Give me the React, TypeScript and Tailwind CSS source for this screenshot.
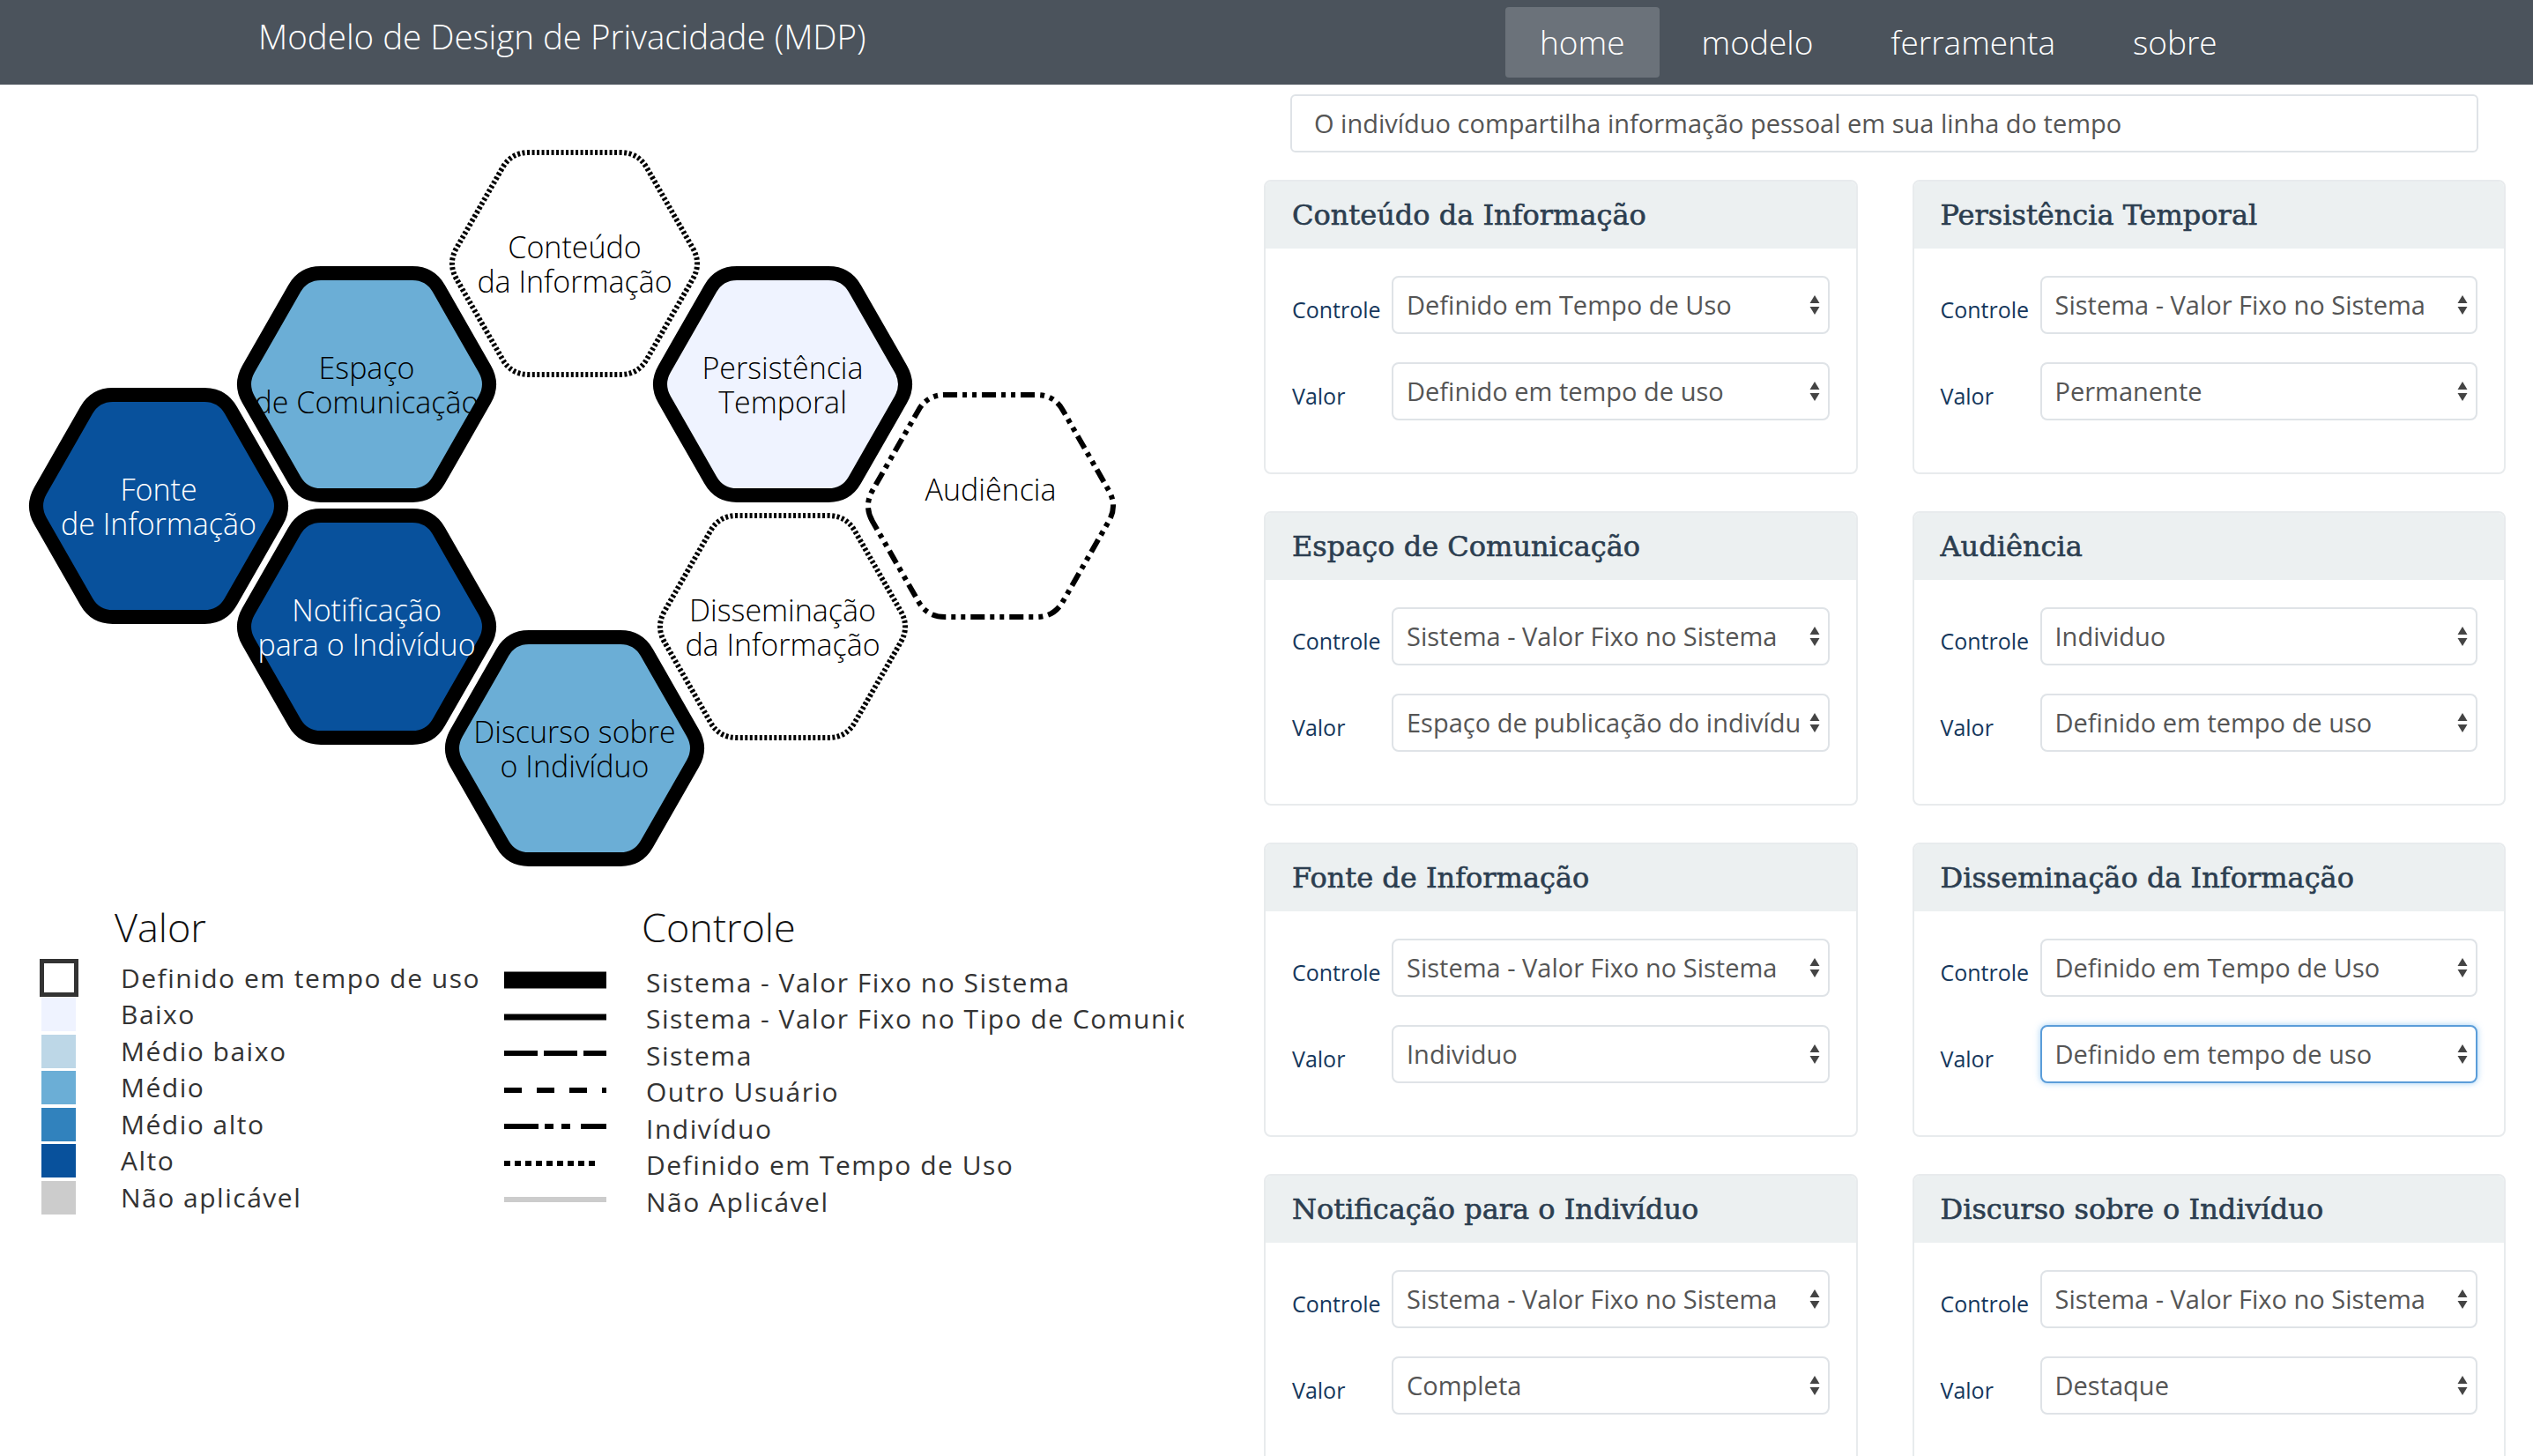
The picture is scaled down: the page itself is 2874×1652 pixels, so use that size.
import React from 'react';

type Pt = [number, number];

// rounded flat-top hexagon
function hexPath(cx: number, cy: number, w: number, h: number, r: number) {
    const pts: Pt[] = [
        [cx - w / 2, cy],
        [cx - w / 4, cy - h / 2],
        [cx + w / 4, cy - h / 2],
        [cx + w / 2, cy],
        [cx + w / 4, cy + h / 2],
        [cx - w / 4, cy + h / 2],
    ];
    const toward = (a: Pt, b: Pt, d: number): Pt => {
        const dx = b[0] - a[0];
        const dy = b[1] - a[1];
        const len = Math.hypot(dx, dy);
        return [a[0] + (dx / len) * d, a[1] + (dy / len) * d];
    };
    let d = '';
    pts.forEach((p, i) => {
        const a = toward(p, pts[(i + 5) % 6], r);
        const b = toward(p, pts[(i + 1) % 6], r);
        d += `${i === 0 ? 'M' : 'L'}${a[0].toFixed(1)},${a[1].toFixed(1)} Q${p[0]},${p[1]} ${b[0].toFixed(1)},${b[1].toFixed(1)} `;
    });
    return d + 'Z';
}

const solid = { strokeWidth: 16 };
const dotted = { strokeWidth: 6, strokeDasharray: '3 2.5' };
const dashDot = { strokeWidth: 6, strokeDasharray: '16 6 5 6 5 6' };

const hexes = [
    { x: 652, y: 299, lines: ['Conteúdo', 'da Informação'], fill: '#ffffff', text: '#000', s: dotted },
    { x: 416, y: 436, lines: ['Espaço', 'de Comunicação'], fill: '#6baed6', text: '#000', s: solid },
    { x: 888, y: 436, lines: ['Persistência', 'Temporal'], fill: '#eff3ff', text: '#000', s: solid },
    { x: 180, y: 574, lines: ['Fonte', 'de Informação'], fill: '#08519c', text: '#fff', s: solid },
    { x: 1124, y: 574, lines: ['Audiência'], fill: '#ffffff', text: '#000', s: dashDot },
    { x: 416, y: 711, lines: ['Notificação', 'para o Indivíduo'], fill: '#08519c', text: '#fff', s: solid },
    { x: 888, y: 711, lines: ['Disseminação', 'da Informação'], fill: '#ffffff', text: '#000', s: dotted },
    { x: 652, y: 849, lines: ['Discurso sobre', 'o Indivíduo'], fill: '#6baed6', text: '#000', s: solid },
];

const valorLegend = [
    { label: 'Definido em tempo de uso', color: '#ffffff', outline: true },
    { label: 'Baixo', color: '#eff3ff' },
    { label: 'Médio baixo', color: '#bdd7e7' },
    { label: 'Médio', color: '#6baed6' },
    { label: 'Médio alto', color: '#3182bd' },
    { label: 'Alto', color: '#08519c' },
    { label: 'Não aplicável', color: '#cccccc' },
];

const controleLegend = [
    { label: 'Sistema - Valor Fixo no Sistema', w: 19, dash: undefined, color: '#000', len: 116 },
    { label: 'Sistema - Valor Fixo no Tipo de Comunicação', w: 7, dash: undefined, color: '#000', len: 116 },
    { label: 'Sistema', w: 6, dash: '38 7', color: '#000', len: 116 },
    { label: 'Outro Usuário', w: 6, dash: '20 17', color: '#000', len: 116 },
    { label: 'Indivíduo', w: 6, dash: '39 7 10 9 10 12', color: '#000', len: 116 },
    { label: 'Definido em Tempo de Uso', w: 6, dash: '7 5', color: '#000', len: 108 },
    { label: 'Não Aplicável', w: 6, dash: undefined, color: '#cccccc', len: 116 },
];

const cards = [
    { title: 'Conteúdo da Informação', controle: 'Definido em Tempo de Uso', valor: 'Definido em tempo de uso' },
    { title: 'Persistência Temporal', controle: 'Sistema - Valor Fixo no Sistema', valor: 'Permanente' },
    { title: 'Espaço de Comunicação', controle: 'Sistema - Valor Fixo no Sistema', valor: 'Espaço de publicação do indivíduo' },
    { title: 'Audiência', controle: 'Individuo', valor: 'Definido em tempo de uso' },
    { title: 'Fonte de Informação', controle: 'Sistema - Valor Fixo no Sistema', valor: 'Individuo' },
    { title: 'Disseminação da Informação', controle: 'Definido em Tempo de Uso', valor: 'Definido em tempo de uso', focus: true },
    { title: 'Notificação para o Indivíduo', controle: 'Sistema - Valor Fixo no Sistema', valor: 'Completa' },
    { title: 'Discurso sobre o Indivíduo', controle: 'Sistema - Valor Fixo no Sistema', valor: 'Destaque' },
];

const SelectBox: React.FC<{ value: string; focus?: boolean }> = ({ value, focus }) => (
    <div
        className={
            focus
                ? 'relative flex-1 min-w-0 h-[66px] border-2 border-[#5b9dd9] shadow-[0_0_7px_rgba(82,168,236,0.55)] rounded-[8px] flex items-center pl-[15px] pr-[31px] bg-white'
                : 'relative flex-1 min-w-0 h-[66px] border-2 border-[#dfe3e7] rounded-[8px] flex items-center pl-[15px] pr-[31px] bg-white'
        }
    >
        <span className="block overflow-hidden whitespace-nowrap text-[29px] text-[#555]">{value}</span>
        <svg className="absolute right-[9px] top-1/2 -translate-y-1/2" width="12" height="24" viewBox="0 0 12 24">
            <path d="M6 1 L11.5 10 H0.5 Z" fill="#444" />
            <path d="M6 23 L11.5 14 H0.5 Z" fill="#444" />
        </svg>
    </div>
);

const App: React.FC = () => {
    return (
        <div className="h-screen w-full overflow-hidden bg-white font-['Open_Sans',sans-serif]">
            <nav className="h-[96px] bg-[#4b535c] flex items-start pl-[293px]">
                <div className="w-[1415px] mt-[17px] text-[38.5px] leading-[48px] text-white font-light">
                    Modelo de Design de Privacidade (MDP)
                </div>
                <ul className="mt-[8px] flex gap-[8px]">
                    {['home', 'modelo', 'ferramenta', 'sobre'].map((item, i) => (
                        <li
                            key={item}
                            className={
                                i === 0
                                    ? 'h-[80px] px-[39px] flex items-center text-[37px] text-white font-light bg-[#6b727a] rounded-[4px]'
                                    : 'h-[80px] px-[40px] flex items-center text-[37px] text-white font-light'
                            }
                        >
                            {item}
                        </li>
                    ))}
                </ul>
            </nav>

            <div className="flex">
                {/* left: diagram + legend */}
                <div className="w-[1434px] shrink-0 flex flex-col">
                    <svg width="1434" height="904" viewBox="0 96 1434 904">
                        {hexes.map((h, i) => (
                            <g key={i}>
                                <path
                                    d={hexPath(h.x, h.y, 288, 252, 20)}
                                    fill={h.fill}
                                    stroke="#000"
                                    strokeLinejoin="round"
                                    {...h.s}
                                />
                                {h.lines.map((line, j) => (
                                    <text
                                        key={j}
                                        x={h.x}
                                        y={h.y - 6 + j * 39}
                                        textAnchor="middle"
                                        fontFamily="'Open Sans', sans-serif"
                                        fontWeight={300}
                                        fontSize="34"
                                        fill={h.text}
                                    >
                                        {line}
                                    </text>
                                ))}
                            </g>
                        ))}
                    </svg>

                    <div className="w-[1343px] overflow-hidden flex whitespace-nowrap mt-[25px] text-[#333]">
                        <div className="w-[572px] shrink-0 pl-[47px]">
                            <div className="pl-[83px] text-[45px] leading-[54px] font-light text-[#111]">Valor</div>
                            <div className="mt-[10px] flex flex-col">
                                {valorLegend.map((v) => (
                                    <div key={v.label} className="h-[41.5px] flex items-center">
                                        <div className="w-[39px] flex justify-center">
                                            {v.outline ? (
                                                <div className="w-[44px] h-[43px] border-[5px] border-[#333] bg-white shrink-0" />
                                            ) : (
                                                <div className="w-[39px] h-[38px] shrink-0" style={{ backgroundColor: v.color }} />
                                            )}
                                        </div>
                                        <span className="ml-[51px] text-[30px] leading-none tracking-[1.5px]">{v.label}</span>
                                    </div>
                                ))}
                            </div>
                        </div>
                        <div className="shrink-0">
                            <div className="pl-[156px] text-[45px] leading-[54px] font-light text-[#111]">Controle</div>
                            <div className="mt-[15px] flex flex-col">
                                {controleLegend.map((c) => (
                                    <div key={c.label} className="h-[41.5px] flex items-center">
                                        <svg width="116" height="20" viewBox="0 0 116 20" className="shrink-0 -mt-[5px]">
                                            <line
                                                x1="0"
                                                y1="10"
                                                x2={c.len}
                                                y2="10"
                                                stroke={c.color}
                                                strokeWidth={c.w}
                                                strokeDasharray={c.dash}
                                            />
                                        </svg>
                                        <span className="ml-[45px] text-[30px] leading-none tracking-[1.5px]">{c.label}</span>
                                    </div>
                                ))}
                            </div>
                        </div>
                    </div>
                </div>

                {/* right: form */}
                <div className="w-[1409px] shrink-0 flex flex-col pt-[11px]">
                    <div className="ml-[30px] w-[1348px] h-[66px] border-2 border-[#dfe3e7] rounded-[6px] flex items-center px-[25px] text-[29px] text-[#555]">
                        O indivíduo compartilha informação pessoal em sua linha do tempo
                    </div>

                    <div className="mt-[31px] grid grid-cols-2 gap-x-[62px] gap-y-[42px]">
                        {cards.map((card) => (
                            <div key={card.title} className="border-2 border-[#e8ebed] rounded-[8px] overflow-hidden">
                                <div className="h-[76px] bg-[#ecf0f1] flex items-center px-[30px] text-[32px] text-[#2c3e50] font-['DejaVu_Serif',serif] [-webkit-text-stroke:0.6px_#2c3e50]">
                                    {card.title}
                                </div>
                                <div className="px-[30px] pt-[31px] pb-[59px] flex flex-col gap-[32px]">
                                    <div className="flex items-center">
                                        <span className="w-[113px] shrink-0 pt-[12px] text-[25px] text-[#15375c]">Controle</span>
                                        <SelectBox value={card.controle} />
                                    </div>
                                    <div className="flex items-center">
                                        <span className="w-[113px] shrink-0 pt-[12px] text-[25px] text-[#15375c]">Valor</span>
                                        <SelectBox value={card.valor} focus={card.focus} />
                                    </div>
                                </div>
                            </div>
                        ))}
                    </div>
                </div>
            </div>
        </div>
    );
};

export default App;
